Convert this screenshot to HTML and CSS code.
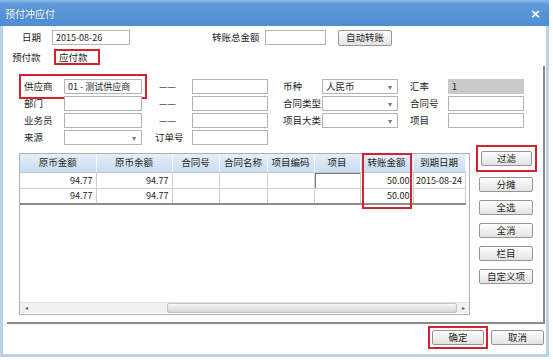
FILE: index.html
```html
<!DOCTYPE html>
<html lang="zh-CN">
<head>
    <meta charset="utf-8">
    <title>预付冲应付</title>
    <link rel="stylesheet" href="styles.css">
</head>
<body>
    <div class="window">
        <div class="titlebar">
            <span class="title">预付冲应付</span>
            <span class="close">×</span>
        </div>
        <div class="frame">
            <div class="toprow">
                <span class="lab-date">日期</span>
                <input class="box date" type="text" value="2015-08-26" readonly>
                <span class="lab-total">转账总金额</span>
                <input class="box total" type="text" readonly>
                <button class="btn auto">自动转账</button>
            </div>
            <div class="row2">
                <span class="lab-pre">预付款</span>
                <span class="flag">应付款</span>
            </div>

            <div class="panel">
                <div class="fields">
                    <div class="frow">
                        <div class="pair flagged">
                            <span class="l1">供应商</span>
                            <input class="box in1" type="text" value="01 - 测试供应商" readonly>
                        </div>
                        <span class="mid">— —</span>
                        <input class="box in2" type="text" readonly>
                        <span class="l3">币种</span>
                        <div class="box sel">人民币<span class="arrow">▾</span></div>
                        <span class="l4">汇率</span>
                        <div class="box in4 grey">1</div>
                    </div>
                    <div class="frow">
                        <div class="pair">
                            <span class="l1">部门</span>
                            <input class="box in1" type="text" readonly>
                        </div>
                        <span class="mid">— —</span>
                        <input class="box in2" type="text" readonly>
                        <span class="l3">合同类型</span>
                        <div class="box sel"><span class="arrow">▾</span></div>
                        <span class="l4">合同号</span>
                        <input class="box in4" type="text" readonly>
                    </div>
                    <div class="frow">
                        <div class="pair">
                            <span class="l1">业务员</span>
                            <input class="box in1" type="text" readonly>
                        </div>
                        <span class="mid">— —</span>
                        <input class="box in2" type="text" readonly>
                        <span class="l3">项目大类</span>
                        <div class="box sel"><span class="arrow">▾</span></div>
                        <span class="l4">项目</span>
                        <input class="box in4" type="text" readonly>
                    </div>
                    <div class="frow">
                        <div class="pair">
                            <span class="l1">来源</span>
                            <div class="box sel in1"><span class="arrow">▾</span></div>
                        </div>
                        <span class="mid order">订单号</span>
                        <input class="box in2" type="text" readonly>
                    </div>
                </div>

                <div class="gridarea">
                    <div class="grid">
                        <table>
                            <thead>
                                <tr>
                                    <th class="c1">原币金额</th>
                                    <th class="c2">原币余额</th>
                                    <th class="c3">合同号</th>
                                    <th class="c4">合同名称</th>
                                    <th class="c5">项目编码</th>
                                    <th class="c6">项目</th>
                                    <th class="c7">转账金额</th>
                                    <th class="c8">到期日期</th>
                                </tr>
                            </thead>
                            <tbody>
                                <tr>
                                    <td>94.77</td>
                                    <td>94.77</td>
                                    <td></td>
                                    <td></td>
                                    <td></td>
                                    <td class="edit"></td>
                                    <td>50.00</td>
                                    <td class="date-cell">2015-08-24</td>
                                </tr>
                                <tr>
                                    <td>94.77</td>
                                    <td>94.77</td>
                                    <td></td>
                                    <td></td>
                                    <td></td>
                                    <td></td>
                                    <td>50.00</td>
                                    <td></td>
                                </tr>
                            </tbody>
                        </table>
                        <div class="colmark"></div>
                        <div class="hscroll">
                            <span class="arr">◂</span>
                            <span class="track"></span>
                            <span class="thumb"></span>
                            <span class="arr">▸</span>
                        </div>
                    </div>

                    <div class="side">
                        <div class="flagbtn">
                            <button class="btn side-btn">过滤</button>
                        </div>
                        <button class="btn side-btn first">分摊</button>
                        <button class="btn side-btn">全选</button>
                        <button class="btn side-btn">全消</button>
                        <button class="btn side-btn">栏目</button>
                        <button class="btn side-btn">自定义项</button>
                    </div>
                </div>
            </div>

            <div class="footer">
                <div class="okwrap">
                    <button class="btn foot-btn">确定</button>
                </div>
                <button class="btn foot-btn cancel">取消</button>
            </div>
        </div>
    </div>
</body>
</html>
```

FILE: styles.css
```css
* {
    box-sizing: border-box;
}
body {
    margin: 0;
    background-color: #fff;
    font-family: "Noto Sans CJK SC", "Liberation Sans", sans-serif;
    font-size: 9.5px;
    line-height: 13px;
    color: #1e1e1e;
    white-space: nowrap;
}
.window {
    width: 549px;
    height: 357px;
}
.titlebar {
    height: 26px;
    background: linear-gradient(#8dbcea 0px, #5f9bda 4px, #4f8dd2 100%);
    color: #fff;
    display: flex;
    align-items: center;
    justify-content: space-between;
    padding: 0 8px 0 5px;
}
.title {
    font-size: 10px;
    text-shadow: 0 0 2px #3a6fae;
}
.close {
    font-size: 13px;
    font-weight: bold;
    font-family: "DejaVu Sans", sans-serif;
}
.frame {
    height: 331px;
    border: 3px solid #bad2ec;
    border-top: 0;
    background-color: #fff;
}

/* inputs */
.box {
    height: 15px;
    border: 1px solid #b3b3b3;
    background-color: #fff;
    padding: 0 0 0 3px;
    margin: 0;
    font-family: "Noto Sans CJK SC", "Liberation Sans", sans-serif;
    font-size: 9px;
    line-height: 13px;
    color: #1e1e1e;
    outline: none;
}
.sel {
    position: relative;
    width: 76px;
    font-size: 9.5px;
}
.sel .arrow {
    position: absolute;
    right: 5px;
    top: 0;
    font-size: 8px;
    color: #777;
}
.grey {
    background-color: #c9c9c9;
    border-color: #c9c9c9;
}

.btn {
    height: 15px;
    border: 1px solid #959595;
    border-radius: 2px;
    background: linear-gradient(#fefefe, #e3e3e3);
    padding: 0;
    font-family: "Noto Sans CJK SC", "Liberation Sans", sans-serif;
    font-size: 9.5px;
    line-height: 13px;
    color: #1e1e1e;
}

/* top rows */
.toprow {
    display: flex;
    align-items: center;
    padding-top: 4px;
    height: 19px;
}
.lab-date {
    margin-left: 19px;
    width: 30px;
}
.date {
    width: 78px;
}
.lab-total {
    margin-left: 82px;
    width: 53px;
}
.total {
    width: 61px;
}
.auto {
    margin-left: 12px;
    width: 54px;
    height: 16px;
}
.row2 {
    display: flex;
    align-items: center;
    margin-top: 4px;
    height: 16px;
}
.lab-pre {
    margin-left: 9px;
    width: 42px;
}
.flag {
    width: 46px;
    height: 16px;
    border: 2px solid #d4232f;
    padding-left: 3px;
    line-height: 12px;
}

/* panel */
.panel {
    margin-left: 4px;
    margin-top: 1px;
    width: 538px;
    height: 258px;
    border-right: 2px solid #8a8a8a;
    border-bottom: 2px solid #8a8a8a;
}
.fields {
    padding: 13px 0 0 17px;
}
.frow {
    display: flex;
    align-items: center;
    height: 15px;
    margin-bottom: 2px;
}
.frow:last-child {
    margin-bottom: 0;
}
.pair {
    display: flex;
    align-items: center;
}
.flagged {
    outline: 2px solid #d4232f;
    outline-offset: 3px;
}
.l1 {
    width: 40px;
}
.in1 {
    width: 78px;
}
.mid {
    width: 50px;
    padding-left: 17px;
    letter-spacing: -1px;
}
.mid.order {
    padding-left: 13px;
    letter-spacing: 0;
}
.in2 {
    width: 76px;
}
.l3 {
    width: 54px;
    padding-left: 15px;
}
.l4 {
    width: 50px;
    padding-left: 12px;
}
.in4 {
    width: 76px;
}

/* grid */
.gridarea {
    display: flex;
    align-items: flex-start;
    padding-left: 12px;
}
.grid {
    position: relative;
    margin-top: 8px;
    width: 451px;
    height: 162px;
    border: 1px solid #b0b0b0;
    display: flex;
    flex-direction: column;
}
table {
    border-collapse: collapse;
    table-layout: fixed;
    width: 445px;
    border-bottom: 2px solid #8c8c8c;
}
th {
    height: 18px;
    padding: 0;
    font-weight: normal;
    font-size: 9.5px;
    background: linear-gradient(#e4eff9, #c9dcef);
    border-right: 1px solid #f4f8fc;
    border-bottom: 1px solid #b9cbe0;
}
td {
    height: 16px;
    padding: 0 3px 0 0;
    text-align: right;
    font-size: 9px;
    border: 1px solid #cfcfcf;
    border-top: 0;
}
td:first-child {
    border-left: 0;
}
td.edit {
    box-shadow: inset 1px 1px 0 #7a7a7a;
}
td.date-cell {
    text-align: center;
    padding: 0;
}
.c1, .c2 {
    width: 76px;
}
.c3, .c5 {
    width: 47px;
}
.c4 {
    width: 48px;
}
.c6 {
    width: 46px;
}
.c7 {
    width: 53px;
}
.c8 {
    width: 52px;
}
.colmark {
    position: absolute;
    left: 342px;
    top: -1px;
    width: 50px;
    height: 56px;
    border: 2px solid #d4232f;
}
.hscroll {
    margin-top: auto;
    margin-bottom: 1px;
    height: 11px;
    display: flex;
    background-color: #f1f1f1;
    border-top: 1px solid #e2e2e2;
}
.arr {
    width: 12px;
    font-size: 6px;
    line-height: 10px;
    text-align: center;
    color: #555;
}
.track {
    width: 135px;
}
.thumb {
    flex: 1;
    background: linear-gradient(#f6f6f6, #d6d6d6);
    border: 1px solid #c2c2c2;
    border-radius: 2px;
}

/* side buttons */
.side {
    margin-left: 6px;
    display: flex;
    flex-direction: column;
}
.flagbtn {
    border: 2px solid #d4232f;
    padding: 4px 3px;
    width: 61px;
}
.side-btn {
    width: 54px;
    margin-top: 8px;
    margin-left: 3px;
}
.flagbtn .side-btn {
    width: 51px;
    margin: 0;
}
.side-btn.first {
    margin-top: 5px;
}

/* footer */
.footer {
    display: flex;
    justify-content: flex-end;
    align-items: center;
    padding: 2px 2px 0 0;
}
.okwrap {
    border: 2px solid #d4232f;
    padding: 2px;
}
.foot-btn {
    width: 52px;
    height: 15px;
}
.cancel {
    margin-left: 3px;
    width: 53px;
}
```
